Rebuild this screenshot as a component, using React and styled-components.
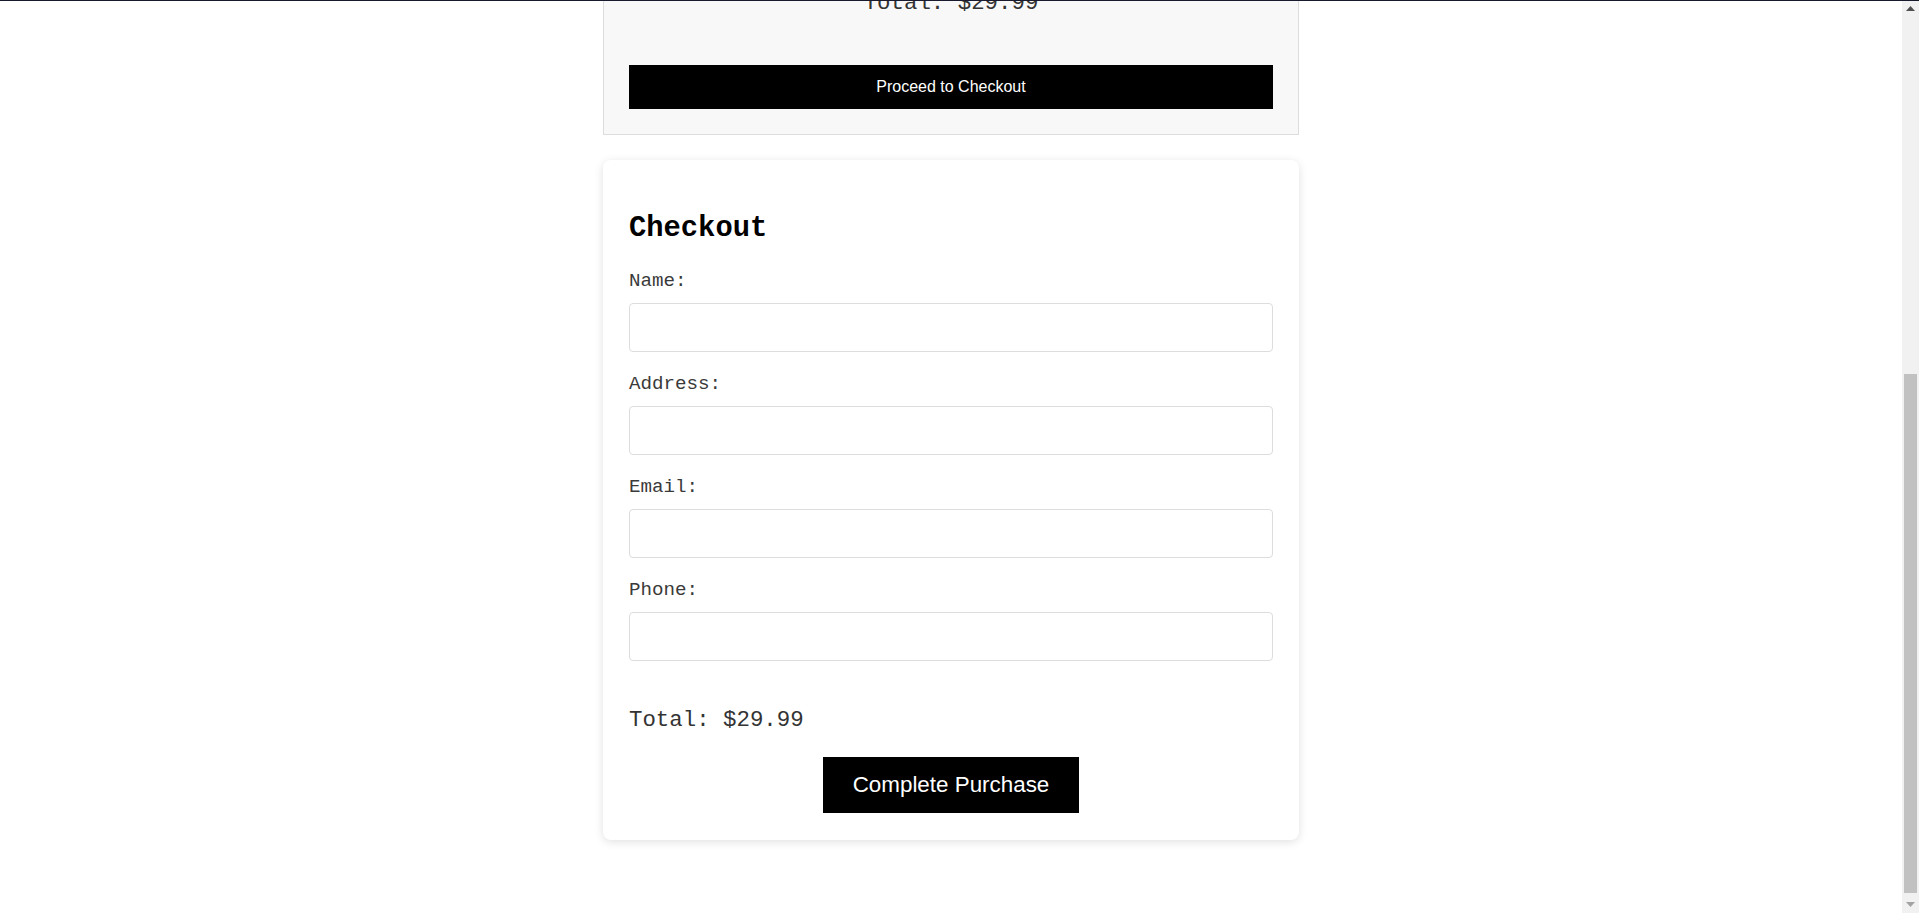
import React, { useLayoutEffect, useEffect } from "react";
import styled, { createGlobalStyle } from "styled-components";

const GlobalStyle = createGlobalStyle`
  html, body {
    margin: 0;
    padding: 0;
    background: #ffffff;
  }
  body {
    font-family: "Liberation Mono", "Courier New", monospace;
    color: #333333;
  }
  * { box-sizing: border-box; }
`;

const TopEdge = styled.div`
  position: fixed;
  top: 0;
  left: 0;
  right: 0;
  height: 1px;
  background: #1a1a2e;
  z-index: 20;
`;

const ScrollTrack = styled.div`
  position: fixed;
  top: 0;
  right: 0;
  bottom: 0;
  width: 17px;
  background: #f1f1f1;
  display: flex;
  flex-direction: column;
  align-items: center;
  z-index: 10;
`;

const ScrollArrow = styled.div`
  height: 17px;
  width: 17px;
  flex: none;
  display: flex;
  align-items: center;
  justify-content: center;
`;

const ScrollSpace = styled.div`
  flex: 1;
  width: 100%;
  display: flex;
  flex-direction: column;
  align-items: center;
  justify-content: flex-end;
`;

const ScrollThumb = styled.div`
  width: 13px;
  height: 519px;
  background: #c1c1c1;
  margin-bottom: 3px;
`;

const Shell = styled.div`
  padding-right: 17px;
`;

const Header = styled.header`
  background: #1a1a2e;
  color: #ffffff;
  height: 80px;
  display: flex;
  align-items: center;
  justify-content: center;
`;

const Brand = styled.h1`
  margin: 0;
  font-size: 28px;
  font-weight: bold;
  letter-spacing: 2px;
`;

const Page = styled.main`
  width: 696px;
  margin: 0 auto;
  padding: 20px 0 73px;
  display: flex;
  flex-direction: column;
  gap: 25px;
`;

const Section = styled.section`
  display: flex;
  flex-direction: column;
`;

const SectionTitle = styled.h2`
  margin: 0 0 20px;
  font-size: 28.8px;
  color: #000000;
`;

const ProductCard = styled.div`
  display: flex;
  gap: 24px;
  border: 1px solid #dddddd;
  padding: 24px;
  align-items: center;
`;

const ProductImage = styled.div`
  width: 200px;
  height: 200px;
  background: #eeeeee;
  flex: none;
`;

const ProductInfo = styled.div`
  display: flex;
  flex-direction: column;
  gap: 14px;
  font-size: 19.2px;
`;

const ProductName = styled.div`
  font-weight: bold;
  color: #000000;
`;

const SansButton = styled.button`
  font-family: "Liberation Sans", Arial, sans-serif;
  background: #000000;
  color: #ffffff;
  border: none;
  border-radius: 0;
  cursor: pointer;
`;

const SmallButton = styled(SansButton)`
  font-size: 16px;
  padding: 10px 20px;
  align-self: flex-start;
`;

const CartPanel = styled.section`
  background: #f8f8f8;
  border: 1px solid #dddddd;
  padding: 25px;
  display: flex;
  flex-direction: column;
`;

const CartTitle = styled.h2`
  margin: 0 0 24px;
  font-size: 28.8px;
  color: #000000;
  text-align: center;
`;

const CartItem = styled.div`
  display: flex;
  justify-content: space-between;
  align-items: center;
  padding: 14px 0;
  border-bottom: 1px solid #dddddd;
  font-size: 19.2px;
  margin-bottom: 24px;
`;

const CartTotal = styled.p`
  margin: 0 0 49px;
  font-size: 22.4px;
  text-align: center;
  color: #333333;
`;

const WideButton = styled(SansButton)`
  width: 100%;
  height: 44px;
  font-size: 16px;
`;

const CheckoutCard = styled.section`
  background: #ffffff;
  border-radius: 8px;
  box-shadow: 0 2px 10px rgba(0, 0, 0, 0.12);
  padding: 26px 26px 27px;
  display: flex;
  flex-direction: column;
`;

const CheckoutTitle = styled.h2`
  margin: 26px 0 25px;
  font-size: 28.8px;
  font-weight: bold;
  color: #000000;
`;

const Field = styled.div`
  display: flex;
  flex-direction: column;
  margin-bottom: 21px;
`;

const Label = styled.label`
  font-size: 19.2px;
  color: #3a3a3a;
  margin-bottom: 11px;
`;

const Input = styled.input`
  width: 100%;
  height: 49px;
  border: 1px solid #dddddd;
  border-radius: 4px;
  padding: 0 12px;
  font-family: "Liberation Mono", "Courier New", monospace;
  font-size: 16px;
  background: #ffffff;
  outline: none;
`;

const Total = styled.p`
  margin: 25px 0 24px;
  font-size: 22.4px;
  color: #333333;
`;

const PurchaseButton = styled(SansButton)`
  align-self: center;
  font-size: 22.4px;
  padding: 15px 30px;
`;

const fields = ["Name", "Address", "Email", "Phone"];

function Scrollbar() {
  return (
    <ScrollTrack>
      <ScrollArrow>
        <svg width="9" height="5" viewBox="0 0 9 5">
          <polygon points="0,5 4.5,0 9,5" fill="#505050" />
        </svg>
      </ScrollArrow>
      <ScrollSpace>
        <ScrollThumb />
      </ScrollSpace>
      <ScrollArrow>
        <svg width="9" height="5" viewBox="0 0 9 5">
          <polygon points="0,0 9,0 4.5,5" fill="#a3a3a3" />
        </svg>
      </ScrollArrow>
    </ScrollTrack>
  );
}

export default function App() {
  useLayoutEffect(() => {
    window.scrollTo(0, document.documentElement.scrollHeight);
  }, []);
  useEffect(() => {
    const id = setTimeout(() => {
      window.scrollTo(0, document.documentElement.scrollHeight);
    }, 0);
    return () => clearTimeout(id);
  }, []);

  return (
    <>
      <GlobalStyle />
      <TopEdge />
      <Scrollbar />
      <Shell>
        <Header>
          <Brand>MONO SHOP</Brand>
        </Header>
        <Page>
          <Section>
            <SectionTitle>Products</SectionTitle>
            <ProductCard>
              <ProductImage />
              <ProductInfo>
                <ProductName>Classic Tee</ProductName>
                <div>$29.99</div>
                <SmallButton>Add to Cart</SmallButton>
              </ProductInfo>
            </ProductCard>
          </Section>
          <CartPanel>
            <CartTitle>Shopping Cart</CartTitle>
            <CartItem>
              <span>Classic Tee x 1</span>
              <span>$29.99</span>
            </CartItem>
            <CartTotal>Total: $29.99</CartTotal>
            <WideButton>Proceed to Checkout</WideButton>
          </CartPanel>
          <CheckoutCard>
            <CheckoutTitle>Checkout</CheckoutTitle>
            {fields.map((f) => (
              <Field key={f}>
                <Label htmlFor={f.toLowerCase()}>{f}:</Label>
                <Input id={f.toLowerCase()} type="text" />
              </Field>
            ))}
            <Total>Total: $29.99</Total>
            <PurchaseButton>Complete Purchase</PurchaseButton>
          </CheckoutCard>
        </Page>
      </Shell>
    </>
  );
}
